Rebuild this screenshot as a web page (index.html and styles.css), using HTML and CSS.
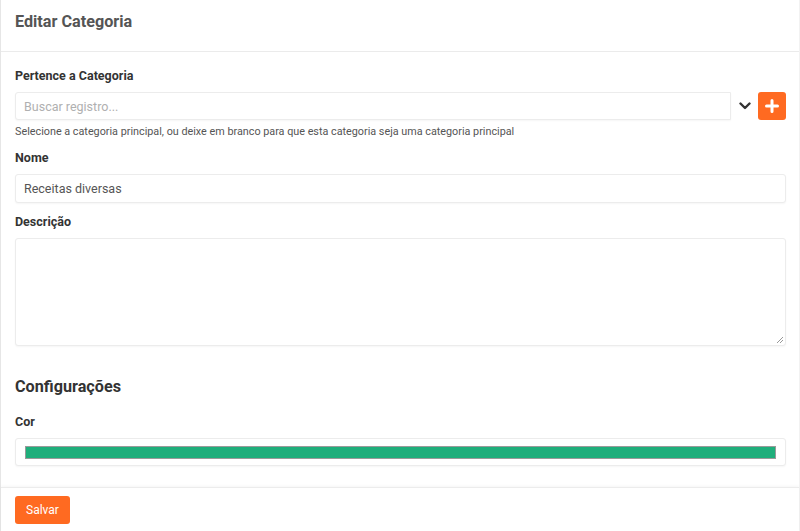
FILE: index.html
```html
<!DOCTYPE html>
<html lang="pt">
<head>
<meta charset="utf-8">
<title>Editar Categoria</title>
<link rel="stylesheet" href="styles.css">
</head>
<body>
<div class="card">
  <div class="card-header">Editar Categoria</div>
  <div class="card-body">
    <div class="field">
      <label class="label">Pertence a Categoria</label>
      <div class="select-row">
        <div class="input select-input"><span class="placeholder">Buscar registro...</span></div>
        <div class="chevron">
          <svg width="12" height="8" viewBox="0 0 12 8"><path d="M1.5 1.5 L6 6 L10.5 1.5" fill="none" stroke="#333" stroke-width="2.4" stroke-linecap="round" stroke-linejoin="round"/></svg>
        </div>
        <button class="add-btn" type="button">
          <svg width="14" height="14" viewBox="0 0 14 14"><path d="M7 1.5 V12.5 M1.5 7 H12.5" stroke="#fff" stroke-width="3" stroke-linecap="round"/></svg>
        </button>
      </div>
      <div class="help">Selecione a categoria principal, ou deixe em branco para que esta categoria seja uma categoria principal</div>
    </div>
    <div class="field">
      <label class="label">Nome</label>
      <div class="input name-input">Receitas diversas</div>
    </div>
    <div class="field">
      <label class="label">Descrição</label>
      <div class="input textarea">
        <svg class="grip" width="8" height="8" viewBox="0 0 8 8"><path d="M7 1 L1 7 M7 4 L4 7" stroke="#999" stroke-width="1"/></svg>
      </div>
    </div>
    <h2 class="section-title">Configurações</h2>
    <div class="field last">
      <label class="label">Cor</label>
      <div class="input color-input"><div class="swatch"></div></div>
    </div>
  </div>
  <div class="card-footer">
    <button class="save-btn" type="button">Salvar</button>
  </div>
</div>
</body>
</html>
```

FILE: styles.css
```css
html, body {
  margin: 0;
  padding: 0;
  background: #fff;
  font-family: Roboto, "Liberation Sans", Arial, sans-serif;
}
.card {
  border-left: 1px solid #e6e6e6;
  border-right: 1px solid #f2f2f2;
  min-height: 531px;
  box-sizing: border-box;
}
.card-header {
  padding: 12px 14px 19px;
  font-size: 16.2px;
  line-height: 20px;
  font-weight: 700;
  color: #555;
  border-bottom: 1px solid #ebebeb;
}
.card-body {
  padding: 15px 13px 21px 14px;
}
.field { margin-bottom: 10px; }
.field.last { margin-bottom: 0; }
.label {
  display: block;
  font-size: 12.5px;
  line-height: 18px;
  font-weight: 700;
  color: #333;
  margin-bottom: 7px;
}
.input {
  box-sizing: border-box;
  border: 1px solid #ececec;
  border-radius: 3px;
  background: #fff;
  box-shadow: 0 1px 2px rgba(0,0,0,0.04);
  font-size: 12.5px;
  color: #555;
}
.select-row {
  display: flex;
  align-items: stretch;
  height: 28px;
}
.select-input {
  flex: 1;
  display: flex;
  align-items: center;
  padding: 0 8px;
  border-radius: 3px 0 0 3px;
}
.placeholder { color: #b0b0b0; }
.chevron {
  width: 27px;
  display: flex;
  align-items: center;
  justify-content: center;
}
.add-btn {
  width: 28px;
  border: none;
  border-radius: 3px;
  background: #ff6a21;
  padding: 0;
  display: flex;
  align-items: center;
  justify-content: center;
}
.help {
  margin-top: 4px;
  font-size: 10.8px;
  line-height: 15px;
  color: #555;
}
.name-input {
  height: 29px;
  display: flex;
  align-items: center;
  padding: 0 8px;
}
.textarea {
  height: 108px;
  position: relative;
}
.grip {
  position: absolute;
  right: 1px;
  bottom: 1px;
}
.section-title {
  margin: 31px 0 16px;
  font-size: 16.2px;
  line-height: 20px;
  font-weight: 700;
  color: #333;
}
.color-input {
  height: 28px;
  display: flex;
  align-items: center;
  padding: 0 9px;
}
.swatch {
  flex: 1;
  height: 11px;
  background: #1fae7b;
  border: 1px solid #9a9a9a;
}
.card-footer {
  border-top: 1px solid #ececec;
  box-shadow: 0 -1px 3px rgba(0,0,0,0.04);
  padding: 8px 14px;
}
.save-btn {
  height: 28px;
  width: 55px;
  border: none;
  border-radius: 3px;
  background: #ff6a21;
  color: #fff;
  font-family: Roboto, "Liberation Sans", Arial, sans-serif;
  font-size: 12px;
  padding: 0;
}
```
